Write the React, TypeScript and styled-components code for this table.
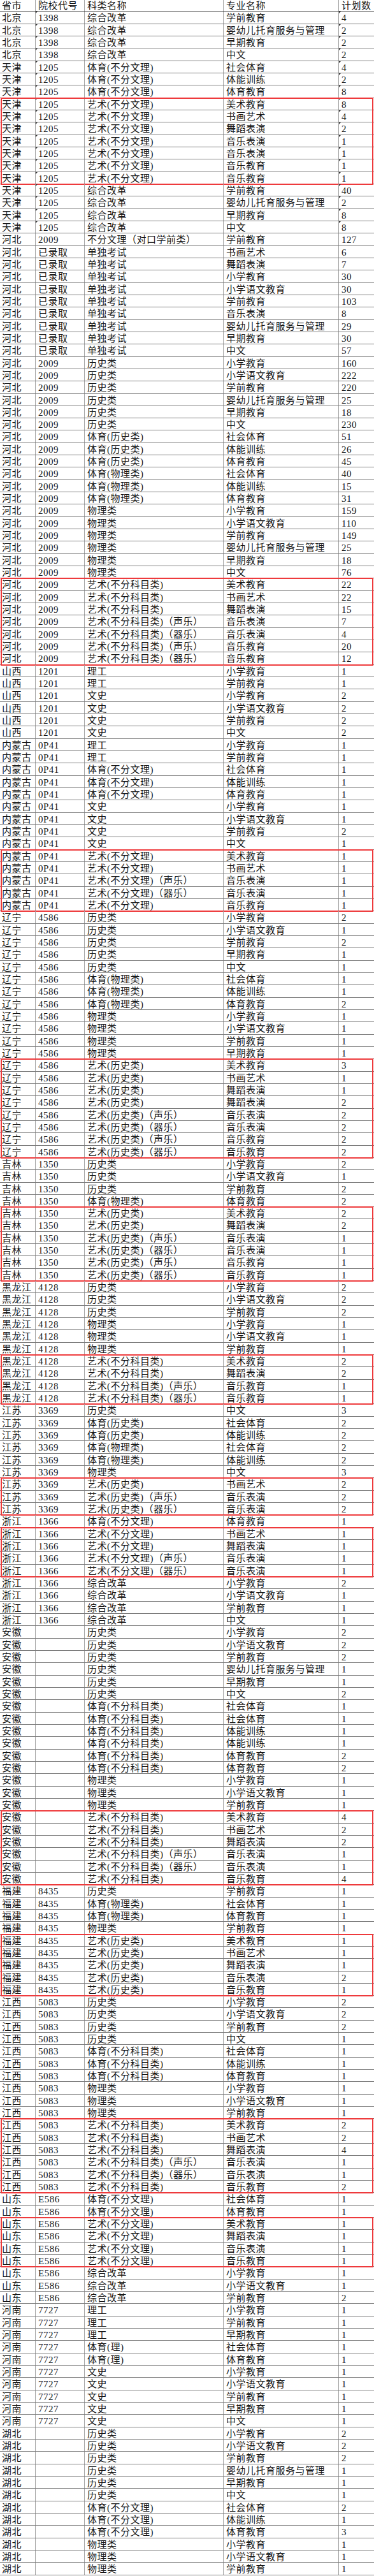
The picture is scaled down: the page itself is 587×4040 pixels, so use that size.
import * as React from 'react';
import styled, {createGlobalStyle} from 'styled-components';

const GlobalStyle = createGlobalStyle`
	html, body {
		margin: 0;
		padding: 0;
		background: #fff;
	}
	body {
		font-family: "Liberation Serif", "Noto Sans CJK SC", serif;
	}
`;

const Sheet = styled.div`
	width: 587px;
	height: 4040px;
	overflow: hidden;
	background: #fff;
	color: #151515;
	font-size: 15px;
	letter-spacing: 0.5px;
`;

const Row = styled.div<{$head?: boolean}>`
	display: grid;
	grid-template-columns: 56px 77px 218px 181px 1fr;
	height: ${(p) => (p.$head ? '18.33px' : '19.33px')};
	box-sizing: border-box;
	border-bottom: 1px solid ${(p) => (p.$head ? '#333' : '#7c7c7c')};
`;

const Cell = styled.div<{$mark?: boolean}>`
	position: relative;
	padding: 2px 0 0 4px;
	line-height: 16px;
	white-space: nowrap;
	overflow: hidden;
	border-right: 1px solid #a2a2a2;

	&:first-child {
		padding-left: 3px;
	}
	&:last-child {
		border-right: none;
	}
	&::before {
		content: '';
		display: ${(p) => (p.$mark ? 'block' : 'none')};
		position: absolute;
		top: 0;
		left: 0;
		border-top: 3px solid #3a3a3a;
		border-right: 3px solid transparent;
	}
`;

const HeadCell = styled(Cell)`
	padding-top: 1px;
`;

const Box = styled.div`
	position: relative;

	&::after {
		content: '';
		position: absolute;
		left: 1px;
		right: 1px;
		top: -1px;
		bottom: -1px;
		border: 2px solid #ee3a3c;
		pointer-events: none;
	}
`;

interface ILine {
	prov: string
	code: string
	cat: string
	major: string
	n: string
}

interface IBlock {
	rows: ILine[]
	box?: boolean
	mark?: boolean
}

// spec: "专业:数" or "专业:数:声乐" for the suffixed category
const r = (prov: string, code: string, cat: string, spec: string): ILine[] =>
	spec.trim().split(/\s+/).map((s) => {
		const [major, n, tag] = s.split(':');
		return {prov, code, cat: tag ? `${cat}（${tag}）` : cat, major, n};
	});

const blocks: IBlock[] = [
	{mark: true, rows: [
		...r('北京', '1398', '综合改革', '学前教育:4 婴幼儿托育服务与管理:2 早期教育:2 中文:2'),
		...r('天津', '1205', '体育(不分文理)', '社会体育:4 体能训练:2 体育教育:8'),
	]},
	{box: true, mark: true, rows: r('天津', '1205', '艺术(不分文理)', '美术教育:8 书画艺术:4 舞蹈表演:2 音乐表演:1 音乐表演:1 音乐教育:1 音乐教育:1')},
	{mark: true, rows: r('天津', '1205', '综合改革', '学前教育:40 婴幼儿托育服务与管理:2 早期教育:8 中文:8')},
	{rows: [
		...r('河北', '2009', '不分文理（对口学前类）', '学前教育:127'),
		...r('河北', '已录取', '单独考试', '书画艺术:6 舞蹈表演:7 小学教育:30 小学语文教育:30 学前教育:103 音乐表演:8 婴幼儿托育服务与管理:29 早期教育:30 中文:57'),
		...r('河北', '2009', '历史类', '小学教育:160 小学语文教育:222 学前教育:220 婴幼儿托育服务与管理:25 早期教育:18 中文:230'),
		...r('河北', '2009', '体育(历史类)', '社会体育:51 体能训练:26 体育教育:45'),
		...r('河北', '2009', '体育(物理类)', '社会体育:40 体能训练:15 体育教育:31'),
		...r('河北', '2009', '物理类', '小学教育:159 小学语文教育:110 学前教育:149 婴幼儿托育服务与管理:25 早期教育:18 中文:76'),
	]},
	{box: true, rows: r('河北', '2009', '艺术(不分科目类)', '美术教育:22 书画艺术:22 舞蹈表演:15 音乐表演:7:声乐 音乐表演:4:器乐 音乐教育:20:声乐 音乐教育:12:器乐')},
	{rows: [
		...r('山西', '1201', '理工', '小学教育:1 学前教育:1'),
		...r('山西', '1201', '文史', '小学教育:2 小学语文教育:2 学前教育:2 中文:2'),
		...r('内蒙古', '0P41', '理工', '小学教育:1 学前教育:1'),
		...r('内蒙古', '0P41', '体育(不分文理)', '社会体育:1 体能训练:1 体育教育:1'),
		...r('内蒙古', '0P41', '文史', '小学教育:1 小学语文教育:1 学前教育:2 中文:1'),
	]},
	{box: true, rows: r('内蒙古', '0P41', '艺术(不分文理)', '美术教育:1 书画艺术:1 音乐表演:1:声乐 音乐表演:1:器乐 音乐教育:1')},
	{rows: [
		...r('辽宁', '4586', '历史类', '小学教育:2 小学语文教育:1 学前教育:2 早期教育:1 中文:1'),
		...r('辽宁', '4586', '体育(物理类)', '社会体育:1 体能训练:1 体育教育:2'),
		...r('辽宁', '4586', '物理类', '小学教育:1 小学语文教育:1 学前教育:1 早期教育:1'),
	]},
	{box: true, rows: r('辽宁', '4586', '艺术(历史类)', '美术教育:3 书画艺术:1 舞蹈表演:1 舞蹈表演:2 音乐表演:2:声乐 音乐表演:2:器乐 音乐教育:2:声乐 音乐教育:2:器乐')},
	{rows: [
		...r('吉林', '1350', '历史类', '小学教育:2 小学语文教育:1 学前教育:2'),
		...r('吉林', '1350', '体育(物理类)', '体育教育:2'),
	]},
	{box: true, rows: r('吉林', '1350', '艺术(历史类)', '美术教育:2 舞蹈表演:2 音乐表演:1:声乐 音乐表演:1:器乐 音乐教育:1:声乐 音乐教育:1:器乐')},
	{rows: [
		...r('黑龙江', '4128', '历史类', '小学教育:2 小学语文教育:2 学前教育:2'),
		...r('黑龙江', '4128', '物理类', '小学教育:1 小学语文教育:1 学前教育:1'),
	]},
	{box: true, rows: r('黑龙江', '4128', '艺术(不分科目类)', '美术教育:2 舞蹈表演:2 音乐教育:1:声乐 音乐教育:1:器乐')},
	{rows: [
		...r('江苏', '3369', '历史类', '中文:3'),
		...r('江苏', '3369', '体育(历史类)', '社会体育:2 体能训练:2'),
		...r('江苏', '3369', '体育(物理类)', '社会体育:2 体能训练:2'),
		...r('江苏', '3369', '物理类', '中文:3'),
	]},
	{box: true, rows: r('江苏', '3369', '艺术(历史类)', '书画艺术:2 音乐表演:2:声乐 音乐表演:2:器乐')},
	{rows: r('浙江', '1366', '体育(不分文理)', '体育教育:1')},
	{box: true, rows: r('浙江', '1366', '艺术(不分文理)', '书画艺术:1 舞蹈表演:1 音乐表演:1:声乐 音乐表演:1:器乐')},
	{rows: [
		...r('浙江', '1366', '综合改革', '小学教育:2 小学语文教育:1 学前教育:1 中文:1'),
		...r('安徽', '', '历史类', '小学教育:2 小学语文教育:2 学前教育:2 婴幼儿托育服务与管理:1 早期教育:1 中文:2'),
		...r('安徽', '', '体育(不分科目类)', '社会体育:1 社会体育:1 体能训练:1 体能训练:1 体育教育:2 体育教育:2'),
		...r('安徽', '', '物理类', '小学教育:1 小学语文教育:1 学前教育:1'),
	]},
	{box: true, rows: r('安徽', '', '艺术(不分科目类)', '美术教育:4 书画艺术:2 舞蹈表演:2 音乐表演:1:声乐 音乐表演:1:器乐 音乐教育:4')},
	{rows: [
		...r('福建', '8435', '历史类', '学前教育:1'),
		...r('福建', '8435', '体育(物理类)', '社会体育:1 体育教育:1'),
		...r('福建', '8435', '物理类', '学前教育:1'),
	]},
	{box: true, rows: r('福建', '8435', '艺术(历史类)', '美术教育:1 书画艺术:1 舞蹈表演:1 音乐表演:2 音乐教育:1')},
	{rows: [
		...r('江西', '5083', '历史类', '小学教育:2 小学语文教育:2 学前教育:2 中文:1'),
		...r('江西', '5083', '体育(不分科目类)', '社会体育:1 体能训练:1 体育教育:1'),
		...r('江西', '5083', '物理类', '小学教育:1 小学语文教育:1 学前教育:1'),
	]},
	{box: true, rows: r('江西', '5083', '艺术(不分科目类)', '美术教育:2 书画艺术:2 舞蹈表演:4 音乐表演:1:声乐 音乐表演:1:器乐 音乐教育:2')},
	{rows: r('山东', 'E586', '体育(不分文理)', '社会体育:1 体育教育:1')},
	{box: true, rows: r('山东', 'E586', '艺术(不分文理)', '美术教育:1 舞蹈表演:1 音乐表演:1 音乐教育:1')},
	{rows: [
		...r('山东', 'E586', '综合改革', '小学教育:1 小学语文教育:1 学前教育:2'),
		...r('河南', '7727', '理工', '小学教育:1 学前教育:1 早期教育:1'),
		...r('河南', '7727', '体育(理)', '社会体育:1 体育教育:1'),
		...r('河南', '7727', '文史', '小学教育:1 小学语文教育:1 学前教育:1 早期教育:1 中文:1'),
		...r('湖北', '', '历史类', '小学教育:2 小学语文教育:2 学前教育:2 婴幼儿托育服务与管理:1 早期教育:1 中文:1'),
		...r('湖北', '', '体育(不分文理)', '社会体育:2 体能训练:1 体育教育:3'),
		...r('湖北', '', '物理类', '小学教育:1 小学语文教育:1 学前教育:1'),
	]},
];

const Lines = ({rows, mark}: {rows: ILine[], mark?: boolean}) => (
	<>
		{rows.map((l, i) => (
			<Row key={i}>
				<Cell>{l.prov}</Cell>
				<Cell $mark={mark}>{l.code}</Cell>
				<Cell>{l.cat}</Cell>
				<Cell>{l.major}</Cell>
				<Cell $mark={mark}>{l.n}</Cell>
			</Row>
		))}
	</>
);

const App: React.FC = () => (
	<>
		<GlobalStyle />
		<Sheet>
			<Row $head>
				<HeadCell>省市</HeadCell>
				<HeadCell>院校代号</HeadCell>
				<HeadCell>科类名称</HeadCell>
				<HeadCell>专业名称</HeadCell>
				<HeadCell>计划数</HeadCell>
			</Row>
			{blocks.map((b, i) => (b.box ? (
				<Box key={i}>
					<Lines rows={b.rows} mark={b.mark} />
				</Box>
			) : (
				<Lines key={i} rows={b.rows} mark={b.mark} />
			)))}
		</Sheet>
	</>
);

export default App;
